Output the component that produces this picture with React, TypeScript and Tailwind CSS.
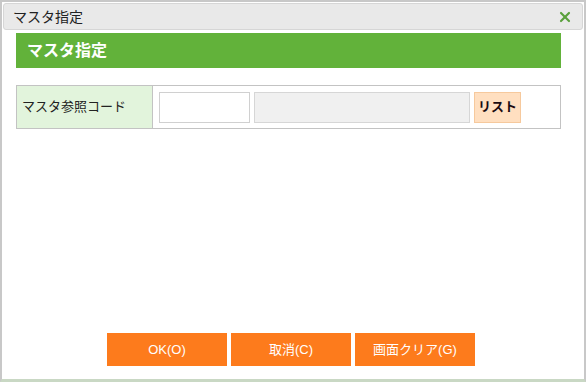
import { X } from 'lucide-react';

export default function App() {
  return (
    <div
      className="w-[586px] h-[382px] bg-white border-2 border-[#c8c8c8] border-b-[3px] border-b-[#c9d8c4] flex flex-col p-[1px]"
      style={{ fontFamily: '"Liberation Sans", "Noto Sans CJK JP", sans-serif' }}
    >
      <div className="h-[27px] flex items-center justify-between bg-[#e9e9e9] border border-[#d6d6d6] rounded-[3px] px-[9px]">
        <span className="text-[14px] text-[#222] leading-none">マスタ指定</span>
        <X className="w-[16px] h-[16px] text-[#5aa03c]" strokeWidth={3.2} />
      </div>

      <div className="flex-1 flex flex-col px-[13px] pt-[3px]">
        <div className="w-[545px] h-[35px] bg-[#62b23a] flex items-center pl-[11px]">
          <span className="text-[16px] font-bold text-white">マスタ指定</span>
        </div>

        <div className="mt-[17px] w-[545px] h-[44px] flex border border-[#c3c3c3]">
          <div className="w-[136px] bg-[#e2f4dc] border-r border-[#c3c3c3] flex items-center pl-[5px]">
            <span className="text-[13px] text-[#222]">マスタ参照コード</span>
          </div>
          <div className="flex-1 flex items-center pl-[6px] gap-[4px]">
            <input className="w-[91px] h-[31px] border border-[#d0d0d0] bg-white outline-none" />
            <input
              disabled
              className="w-[216px] h-[31px] border border-[#d6d6d6] bg-[#f0f0f0] outline-none"
            />
            <button className="w-[47px] h-[31px] bg-[#ffdfc0] border border-[#f6c99d] text-[13px] font-bold text-[#1a0a10]">
              リスト
            </button>
          </div>
        </div>

        <div className="mt-auto mb-[12px] flex justify-center gap-[4px] pr-[4px]">
          {['OK(O)', '取消(C)', '画面クリア(G)'].map((label) => (
            <button
              key={label}
              className="w-[120px] h-[33px] bg-[#fd7b1c] text-white text-[13px]"
            >
              {label}
            </button>
          ))}
        </div>
      </div>
    </div>
  );
}
